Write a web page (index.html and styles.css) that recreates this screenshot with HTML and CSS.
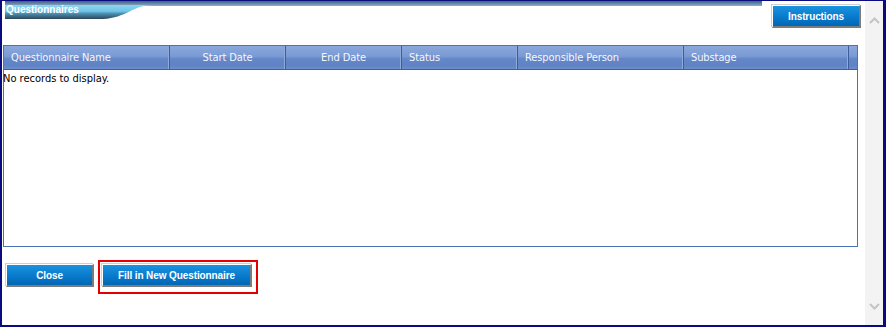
FILE: index.html
```html
<!DOCTYPE html>
<html>
<head>
<meta charset="utf-8">
<link rel="stylesheet" href="styles.css">
</head>
<body>
<div class="frame">
  <div class="main">
    <div class="top">
      <div class="title">
        <svg class="title-bg" width="757" height="18" viewBox="0 0 757 18">
          <defs>
            <linearGradient id="strip" x1="0" y1="0" x2="0" y2="1">
              <stop offset="0" stop-color="#3a5f88"/>
              <stop offset="1" stop-color="#8fb0c6"/>
            </linearGradient>
            <linearGradient id="tab" x1="0" y1="0" x2="0" y2="1">
              <stop offset="0" stop-color="#8fd5ef"/>
              <stop offset="0.45" stop-color="#6ec4e7"/>
              <stop offset="0.62" stop-color="#4b8eae"/>
              <stop offset="1" stop-color="#2e465c"/>
            </linearGradient>
          </defs>
          <rect x="0" y="0" width="757" height="5" fill="url(#strip)"/>
          <path d="M0 4 H148 C128 4 121 17 98 18 H0 Z" fill="url(#tab)"/>
        </svg>
        <span class="title-text">Questionnaires</span>
      </div>
      <button class="btn btn-instr">Instructions</button>
    </div>
    <div class="grid">
      <div class="grid-head">
        <div class="th left">Questionnaire Name</div>
        <div class="th">Start Date</div>
        <div class="th">End Date</div>
        <div class="th left">Status</div>
        <div class="th left">Responsible Person</div>
        <div class="th left">Substage</div>
        <div class="th last"></div>
      </div>
      <div class="grid-body">No records to display.</div>
    </div>
    <div class="actions">
      <button class="btn btn-close">Close</button>
      <div class="highlight">
        <button class="btn btn-fill">Fill in New Questionnaire</button>
      </div>
    </div>
  </div>
  <div class="scroll">
    <svg width="11" height="7" viewBox="0 0 11 7"><path d="M1 6 L5.5 1.5 L10 6" fill="none" stroke="#c4c4c4" stroke-width="2"/></svg>
    <svg width="11" height="7" viewBox="0 0 11 7"><path d="M1 1 L5.5 5.5 L10 1" fill="none" stroke="#c4c4c4" stroke-width="2"/></svg>
  </div>
</div>
</body>
</html>
```

FILE: styles.css
```css
html, body {
  margin: 0;
  padding: 0;
  background: #ffffff;
}
body {
  font-family: Tahoma, "DejaVu Sans Condensed", "Liberation Sans", sans-serif;
  font-size: 11px;
}
.frame {
  width: 886px;
  height: 327px;
  box-sizing: border-box;
  border-style: solid;
  border-color: #0b0b80;
  border-width: 1px 3px 2px 2px;
  display: flex;
  background: #fff;
}
.main {
  flex: 1;
  display: flex;
  flex-direction: column;
}
.top {
  display: flex;
  align-items: flex-start;
  height: 44px;
}
.title {
  position: relative;
  margin-left: 3px;
  width: 757px;
  height: 18px;
}
.title-bg {
  display: block;
}
.title-text {
  position: absolute;
  left: 1px;
  top: 3px;
  color: #ffffff;
  font-family: "Liberation Sans", Arial, sans-serif;
  font-weight: bold;
  font-size: 10px;
}
.btn {
  font-family: "Liberation Sans", Arial, sans-serif;
  font-size: 10px;
  font-weight: bold;
  letter-spacing: -0.1px;
  color: #ffffff;
  background: linear-gradient(#1b93df, #0a7ccd 50%, #0067b5);
  border-style: solid;
  border-width: 1px 2px 2px 1px;
  border-color: #ffffff #7c7c7c #7c7c7c #ffffff;
  box-shadow: -1px -1px 0 #cfcfcf;
  padding: 0;
  height: 23px;
  box-sizing: border-box;
  cursor: pointer;
}
.btn-instr {
  margin-left: auto;
  margin-top: 4px;
  margin-right: 4px;
  width: 89px;
}
.grid {
  margin-left: 1px;
  width: 855px;
  height: 202px;
  box-sizing: border-box;
  border: 1px solid #4a72b8;
  display: flex;
  flex-direction: column;
}
.grid-head {
  display: grid;
  grid-template-columns: 166px 116px 116px 116px 166px 165px 1fr;
  height: 23px;
  background: linear-gradient(#8ba8dc, #7a9ad4 45%, #6487c8 55%, #5f83c5 85%, #6c8ecd);
  border-bottom: 1px solid #3e5f9e;
}
.th {
  color: #f4f7fc;
  font-size: 11px;
  line-height: 23px;
  text-align: center;
  border-right: 1px solid #3c5c9a;
  box-shadow: inset -1px 0 0 #8eabdc;
  white-space: nowrap;
  letter-spacing: -0.1px;
}
.th.left {
  text-align: left;
  padding-left: 7px;
}
.th.last {
  border-right: none;
  box-shadow: none;
}
.grid-body {
  color: #000;
  font-size: 11px;
  padding: 2px 0 0 0;
  margin-left: -1px;
}
.actions {
  display: flex;
  align-items: flex-start;
  padding-top: 13px;
  padding-left: 4px;
}
.btn-close {
  width: 88px;
  margin-top: 4px;
}
.highlight {
  margin-left: 4px;
  border: 2px solid #e40000;
  padding: 2px 4px 5px 2px;
  display: flex;
}
.btn-fill {
  width: 150px;
}
.scroll {
  width: 18px;
  background: #f3f3f3;
  display: flex;
  flex-direction: column;
  justify-content: space-between;
  align-items: center;
  padding: 16px 0 15px;
  box-sizing: border-box;
}
.scroll svg {
  display: block;
}
```
